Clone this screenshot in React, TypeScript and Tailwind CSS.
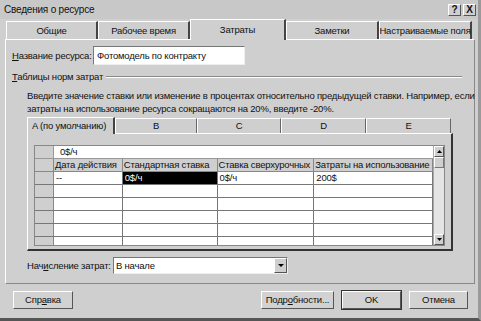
const rows = [
  ["--", "0$/ч", "0$/ч", "200$"],
  ["", "", "", ""],
  ["", "", "", ""],
  ["", "", "", ""],
  ["", "", "", ""],
  ["", "", "", ""],
];

const cols = ["w-[69px]", "w-[95px]", "w-[97px]", "w-[119px]"];
const heads = ["Дата действия", "Стандартная ставка", "Ставка сверхурочных", "Затраты на использование"];

const Btn = ({ label, w, def }: { label: React.ReactNode; w: string; def?: boolean }) => (
  <div
    className={`${w} h-[18px] flex items-center justify-center bg-[#d2d2d2] border border-t-white border-l-white border-r-[#555] border-b-[#555] ${def ? "outline outline-1 outline-[#333]" : ""}`}
  >
    {label}
  </div>
);

export default function App() {
  return (
    <div className="w-[481px] h-[321px] bg-[#cfcfcf] text-[9.5px] tracking-[-0.2px] text-[#111] font-['Liberation_Sans',sans-serif] flex flex-col border-r-[3px] border-r-[#9a9a9a] border-b-[3px] border-b-[#555] leading-none whitespace-nowrap">
      {/* title bar */}
      <div className="h-[19px] flex items-center pl-[4px] pr-[2px] bg-[#c8c8c8]">
        <span className="flex-1 text-[10px]">Сведения о ресурсе</span>
        <div className="flex gap-[2px]">
          <div className="w-[13px] h-[12px] bg-[#cfcfcf] border border-t-white border-l-white border-r-[#555] border-b-[#555] flex items-center justify-center font-bold text-[10px]">?</div>
          <div className="w-[13px] h-[12px] bg-[#cfcfcf] border border-t-white border-l-white border-r-[#555] border-b-[#555] flex items-center justify-center font-bold text-[10px]">X</div>
        </div>
      </div>

      {/* tabs */}
      <div className="flex items-end pl-[6px] h-[20px]">
        {["Общие", "Рабочее время"].map((t) => (
          <div key={t} className="w-[92px] h-[18px] flex items-center justify-center border-t border-l border-white border-r-2 border-r-[#444] bg-[#cfcfcf]">{t}</div>
        ))}
        <div className="w-[96px] h-[21px] flex items-center justify-center border-t border-l border-white border-r-2 border-r-[#444] bg-[#cfcfcf] relative top-[1px] z-10">Затраты</div>
        {["Заметки", "Настраиваемые поля"].map((t) => (
          <div key={t} className="w-[93px] h-[18px] flex items-center justify-center border-t border-l border-white border-r-2 border-r-[#444] bg-[#cfcfcf]">{t}</div>
        ))}
      </div>

      {/* panel */}
      <div className="mx-[5px] w-[470px] h-[245px] border-t border-l border-white border-r border-r-[#888] border-b border-b-[#888] flex flex-col px-[6px]">
        <div className="flex items-center mt-[6px] h-[19px]">
          <span className="w-[81px]"><u>Н</u>азвание ресурса:</span>
          <div className="w-[152px] h-[19px] bg-white border border-t-[#777] border-l-[#777] border-r-[#eee] border-b-[#eee] flex items-center pl-[3px]">Фотомодель по контракту</div>
        </div>

        <div className="flex items-center mt-[6px] h-[12px]">
          <span className="pr-[3px]"><u>Т</u>аблицы норм затрат</span>
          <div className="flex-1 border-t border-t-[#888] border-b border-b-white mr-[6px]"></div>
        </div>

        <div className="mt-[6px] pl-[15px] leading-[13px]">
          Введите значение ставки или изменение в процентах относительно предыдущей ставки. Например, если
          <br />
          затраты на использование ресурса сокращаются на 20%, введите -20%.
        </div>

        {/* inner tabs */}
        <div className="ml-[15px] mt-[1px] flex items-end h-[17px]">
          <div className="w-[88px] h-[17px] flex items-center pl-[4px] border-t border-l border-white border-r-2 border-r-[#444] relative top-[1px] z-10 bg-[#cfcfcf]">A (по умолчанию)</div>
          {[["B", "w-[82px]"], ["C", "w-[84px]"], ["D", "w-[85px]"], ["E", "w-[85px]"]].map(([t, w]) => (
            <div key={t} className={`${w} h-[15px] flex items-center justify-center border-t border-l border-white border-r border-r-[#666]`}>{t}</div>
          ))}
        </div>
        <div className="ml-[15px] w-[426px] h-[118px] border-t border-l border-white border-r-2 border-b-2 border-r-[#333] border-b-[#333] pt-[11px] pl-[6px]">
          <div className="w-[411px] h-[101px] flex border border-[#888] bg-white">
            <div className="flex-1 flex flex-col overflow-hidden">
              {/* edit bar */}
              <div className="h-[13px] flex border-b border-[#999] shrink-0">
                <div className="w-[19px] bg-[#cfcfcf] border-r border-[#999]"></div>
                <div className="flex-1 pl-[6px] flex items-center">0$/ч</div>
              </div>
              {/* header */}
              <div className="h-[13px] flex border-b border-[#888] bg-[#cfcfcf] shrink-0">
                <div className="w-[19px] border-r border-[#888]"></div>
                {heads.map((h, i) => (
                  <div key={h} className={`${cols[i]} border-r border-[#888] flex items-center pl-[1px] overflow-hidden`}>{h}</div>
                ))}
              </div>
              {rows.map((r, ri) => (
                <div key={ri} className="h-[13px] flex border-b border-[#777] shrink-0">
                  <div className="w-[19px] bg-[#cfcfcf] border-r border-[#888]"></div>
                  {r.map((c, ci) => (
                    <div
                      key={ci}
                      className={`${cols[ci]} border-r border-[#777] flex items-center pl-[2px] ${ri === 0 && ci === 1 ? "bg-black text-white" : "bg-white"}`}
                    >
                      {c}
                    </div>
                  ))}
                </div>
              ))}
            </div>
            {/* scrollbar */}
            <div className="w-[11px] bg-[#e4e4e4] flex flex-col border-l border-[#aaa]">
              <div className="h-[11px] bg-[#cfcfcf] border border-t-white border-l-white border-r-[#555] border-b-[#555] flex items-center justify-center">
                <svg width="5" height="3" viewBox="0 0 5 3"><path d="M2.5 0 L5 3 L0 3 Z" fill="#000" /></svg>
              </div>
              <div className="h-[11px] bg-[#cfcfcf] border border-t-white border-l-white border-r-[#777] border-b-[#777]"></div>
              <div className="flex-1"></div>
              <div className="h-[11px] bg-[#cfcfcf] border border-t-white border-l-white border-r-[#555] border-b-[#555] flex items-center justify-center">
                <svg width="5" height="3" viewBox="0 0 5 3"><path d="M0 0 L5 0 L2.5 3 Z" fill="#000" /></svg>
              </div>
            </div>
          </div>
        </div>

        <div className="flex items-center mt-[6px] ml-[15px] h-[17px]">
          <span className="w-[86px]">Нач<u>и</u>сление затрат:</span>
          <div className="w-[175px] h-[17px] bg-white border border-t-[#777] border-l-[#777] border-r-[#eee] border-b-[#eee] flex items-center">
            <span className="flex-1 pl-[2px]">В начале</span>
            <div className="w-[13px] h-[15px] bg-[#cfcfcf] border border-t-white border-l-white border-r-[#555] border-b-[#555] flex items-center justify-center">
              <svg width="6" height="3" viewBox="0 0 6 3"><path d="M0 0 L6 0 L3 3 Z" fill="#000" /></svg>
            </div>
          </div>
        </div>
      </div>

      {/* buttons */}
      <div className="flex items-center mt-[7px] pl-[13px] h-[18px]">
        <Btn label={<span>Спр<u>а</u>вка</span>} w="w-[60px]" />
        <div className="flex-1"></div>
        <div className="flex gap-[8px] pr-[10px]">
          <Btn label={<span>Подр<u>о</u>бности...</span>} w="w-[73px]" />
          <Btn label="OK" w="w-[59px]" def />
          <Btn label="Отмена" w="w-[59px]" />
        </div>
      </div>
    </div>
  );
}
